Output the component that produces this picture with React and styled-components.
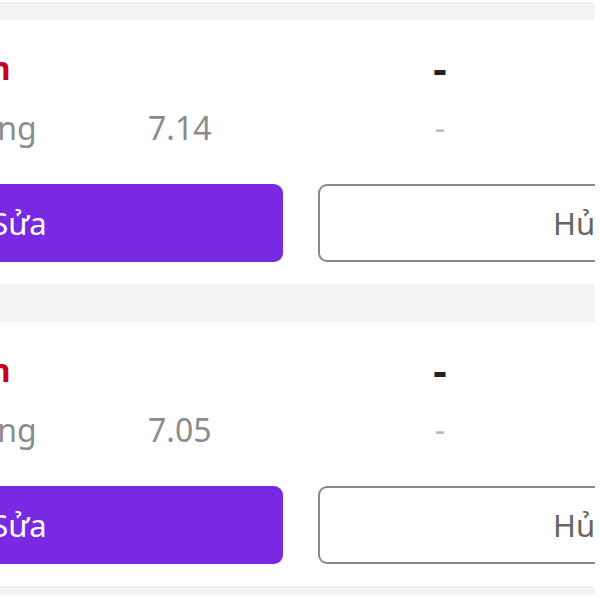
import React from 'react';
import styled, { createGlobalStyle } from 'styled-components';

const GlobalStyle = createGlobalStyle`
  body {
    margin: 0;
    background: #fff;
    font-family: "Noto Sans", "Open Sans", sans-serif;
  }
`;

// màn hình bị cắt, chỉ thấy một phần danh sách
const Viewport = styled.div`
  width: 595px;
  height: 593px;
  margin-top: 2px;
  padding-top: 18px;
  box-sizing: border-box;
  background: #f3f3f3;
  overflow: hidden;
`;

const List = styled.div`
  display: flex;
  flex-direction: column;
  gap: 38px;
  width: 1131px;
  margin-left: -265px;
`;

const Card = styled.div`
  display: flex;
  flex-direction: column;
  background: #fff;
  padding: 28px 20px 22px;
`;

const InfoGrid = styled.div`
  display: grid;
  grid-template-columns: 264px 200px 184px;
  row-gap: 20px;
  padding-left: 129px;
  font-size: 32px;
  line-height: 40px;
`;

const tones = {
  status: 'color: #c5001f; font-weight: 700;',
  label: 'color: #8c8c8c;',
  value: 'color: #8c8c8c;',
  dash: 'color: #222; font-weight: 700; font-size: 42px;',
  muted: 'color: #bcbcbc;',
};

const Cell = styled.div`
  white-space: nowrap;
  text-align: ${(p) => (p.$center ? 'center' : 'left')};
  ${(p) => tones[p.$tone]}
`;

const Actions = styled.div`
  display: grid;
  grid-template-columns: 1fr 1fr;
  gap: 35px;
  margin-top: 36px;
`;

const Button = styled.button`
  height: 78px;
  border-radius: 9px;
  font-family: inherit;
  font-size: 31px;
  box-sizing: border-box;
  ${(p) =>
    p.$primary
      ? 'background: #7a29e2; color: #fff; border: none;'
      : 'background: #fff; color: #666; border: 2px solid #8a8a8a;'}
`;

const orders = [
  { status: 'Hết hạn', label: 'Sản lượng', value: '7.14' },
  { status: 'Hết hạn', label: 'Sản lượng', value: '7.05' },
];

function App() {
  return (
    <>
      <GlobalStyle />
      <Viewport>
        <List>
          {orders.map((o, i) => (
            <Card key={i}>
              <InfoGrid>
                <Cell $tone="status">{o.status}</Cell>
                <Cell $tone="value"></Cell>
                <Cell $tone="dash" $center>-</Cell>
                <Cell $tone="label">{o.label}</Cell>
                <Cell $tone="value">{o.value}</Cell>
                <Cell $tone="muted" $center>-</Cell>
              </InfoGrid>
              <Actions>
                <Button $primary>Sửa</Button>
                <Button>Hủy</Button>
              </Actions>
            </Card>
          ))}
        </List>
      </Viewport>
    </>
  );
}

export default App;
